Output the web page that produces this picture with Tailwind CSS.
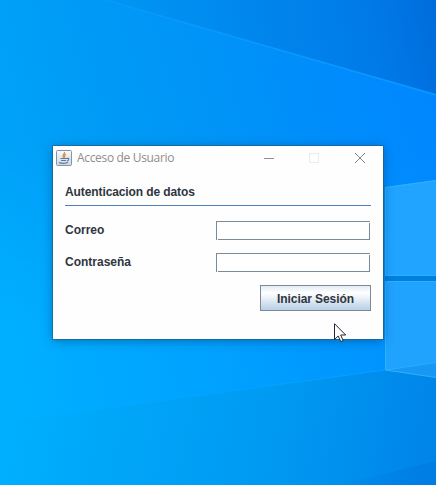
<!DOCTYPE html>
<html lang="es">
<head>
<meta charset="utf-8">
<title>Acceso de Usuario</title>
<script src="https://cdn.jsdelivr.net/npm/@tailwindcss/browser@4"></script>
</head>
<body class="relative h-[485px] w-[436px] overflow-hidden bg-[#0098f8]">
<svg class="absolute inset-0" width="436" height="485" viewBox="0 0 436 485">
  <defs>
    <linearGradient id="base" gradientUnits="userSpaceOnUse" x1="0" y1="230" x2="436" y2="110"><stop offset="0" stop-color="#00a4f9"/><stop offset=".35" stop-color="#0099f5"/><stop offset=".7" stop-color="#008ffa"/><stop offset="1" stop-color="#0087ff"/></linearGradient>
    <linearGradient id="top" gradientUnits="userSpaceOnUse" x1="110" y1="60" x2="436" y2="0"><stop offset="0" stop-color="#0098f4"/><stop offset=".4" stop-color="#0088ee"/><stop offset=".8" stop-color="#007ae8"/><stop offset="1" stop-color="#006cdc"/></linearGradient>
    <linearGradient id="low" gradientUnits="userSpaceOnUse" x1="0" y1="400" x2="436" y2="485"><stop offset="0" stop-color="#00b0ff"/><stop offset=".3" stop-color="#00a5f8"/><stop offset=".65" stop-color="#0098f1"/><stop offset="1" stop-color="#0083e8"/></linearGradient>
    <linearGradient id="mid" gradientUnits="userSpaceOnUse" x1="0" y1="400" x2="400" y2="340"><stop offset="0" stop-color="#00b0ff"/><stop offset=".5" stop-color="#00a3ff"/><stop offset="1" stop-color="#0092ff"/></linearGradient>
    <linearGradient id="fade" x1="0" y1="0" x2="0" y2="1"><stop offset="0" stop-color="#fff" stop-opacity="0"/><stop offset="1" stop-color="#fff"/></linearGradient>
    <linearGradient id="ray" gradientUnits="userSpaceOnUse" x1="0" y1="0" x2="385" y2="0"><stop offset="0" stop-color="#00b4ff" stop-opacity="0"/><stop offset="1" stop-color="#12a8ff"/></linearGradient>
    <linearGradient id="corner" gradientUnits="userSpaceOnUse" x1="340" y1="0" x2="436" y2="0"><stop offset="0" stop-color="#007de3" stop-opacity="0"/><stop offset="1" stop-color="#007de3"/></linearGradient>
    <mask id="m"><rect y="140" width="436" height="200" fill="url(#fade)"/><rect y="340" width="436" height="145" fill="#fff"/></mask>
  </defs>
  <rect width="436" height="485" fill="url(#base)"/>
  <rect y="140" width="436" height="345" fill="url(#mid)" mask="url(#m)"/>
  <path d="M105 0H436V95Z" fill="url(#top)"/>
  <path d="M105 0L436 95" stroke="#0a98ff" stroke-width="1.8"/>
  <path d="M0 423L385 370L436 377V485H0Z" fill="url(#low)"/>
  <path d="M0 423L385 370" stroke="url(#ray)" stroke-width="1" opacity=".6"/>
  <path d="M340 485L436 461V485Z" fill="url(#corner)"/>
  <path d="M385 187L436 180V275.500H385Z" fill="#20a4ff"/>
  <path d="M385 281H436V377L385 370Z" fill="#20a2ff"/>
  <path d="M386 370L436 362V377Z" fill="#1898f5"/>
  <path d="M385 276H436V281H385Z" fill="#007fe0"/>
  <path d="M385.500 276V187.500L436 180.500M386 275.500H436M386 281.500H436M385.500 282V370L436 377.500" fill="none" stroke="#2cb2fb"/>
  <path d="M386 370L436 362.500" stroke="#31b0ff" stroke-width=".8"/>
</svg>

<main class="absolute left-[53px] top-[146px] flex h-[193px] w-[330px] flex-col bg-[#fefefe] shadow-[0_0_0_1px_rgba(35,85,120,0.55),0_2px_10px_0_rgba(0,40,80,0.42)]">
  <header class="flex h-6 shrink-0 items-center pl-[3px]">
    <svg width="16" height="16" viewBox="0 0 16 16" fill="none">
      <defs><linearGradient id="java" x1="0" y1="0" x2="0" y2="1"><stop stop-color="#fafafa"/><stop offset="1" stop-color="#cdd7e2"/></linearGradient></defs>
      <rect x=".5" y=".5" width="15" height="15" rx="1" fill="url(#java)" stroke="#8294a8"/>
      <path d="M8.500 2C9 4 5.500 4.800 7.500 8M10 4C7.800 5 8 6 8.700 7.700" stroke="#d78b50" stroke-width="1.200"/>
      <path d="M4.500 8.500H10.500M5 10.500H10M3 12.500C5 13.600 10 13.600 12 12.300M10.500 8.500C13.500 7.700 13.500 10 11 11" stroke="#607b99" stroke-width="1.200"/>
    </svg>
    <h1 class="ml-[5px] whitespace-nowrap font-['Open_Sans',sans-serif] text-[12px] leading-4 tracking-[-0.33px] text-[#918d8c]">Acceso de Usuario</h1>
    <svg class="ml-auto mr-[15px]" width="104" height="12" viewBox="0 0 104 12" fill="none" shape-rendering="crispEdges">
      <path d="M0 6.500H10" stroke="#918f9c"/>
      <rect x="45.500" y="1.500" width="9" height="9" stroke="#e4edf5"/>
      <path d="M91 1L101 11M101 1L91 11" stroke="#858392" shape-rendering="auto"/>
    </svg>
  </header>
  <form class="flex flex-col px-3 font-['Liberation_Sans',Arial,sans-serif] text-[12px] font-bold leading-4 text-[#2f3540]" onsubmit="return false">
    <h2 class="mt-[14px] h-[21px] whitespace-nowrap tracking-[-0.1px]">Autenticacion de datos</h2>
    <hr class="h-px border-0 bg-[#4c81b8]">
    <div class="mt-[15px] flex h-[19px] items-center justify-between pr-px">
      <label class="pb-[2px]" for="correo">Correo</label>
      <span class="relative h-[19px] w-[154px]"><input id="correo" class="block h-full w-full border border-[#7a8a99] bg-white px-1 outline-none"><i class="absolute bottom-0 left-px h-px w-px bg-white"></i><i class="absolute right-0 top-px h-px w-px bg-white"></i></span>
    </div>
    <div class="mt-[13px] flex h-[19px] items-center justify-between pr-px">
      <label class="pb-[2px]" for="clave">Contraseña</label>
      <span class="relative h-[19px] w-[154px]"><input id="clave" type="password" class="block h-full w-full border border-[#7a8a99] bg-white px-1 outline-none"><i class="absolute bottom-0 left-px h-px w-px bg-white"></i><i class="absolute right-0 top-px h-px w-px bg-white"></i></span>
    </div>
    <button class="mt-[13px] h-[26px] w-[111px] self-end whitespace-nowrap border border-[#7a8a99] bg-linear-to-b from-[#e4edf5] via-white via-30% to-[#b8cfe5] pt-px leading-4 tracking-[-0.08px]">Iniciar Sesión</button>
  </form>
</main>
<svg class="absolute left-[334px] top-[323px]" width="13" height="20" viewBox="0 0 13 20"><path d="M.5 .7V16.500L4.200 13L6.800 18.600L9.200 17.500L6.700 12H11.700Z" fill="#fff" stroke="#252538"/></svg>
</body>
</html>
